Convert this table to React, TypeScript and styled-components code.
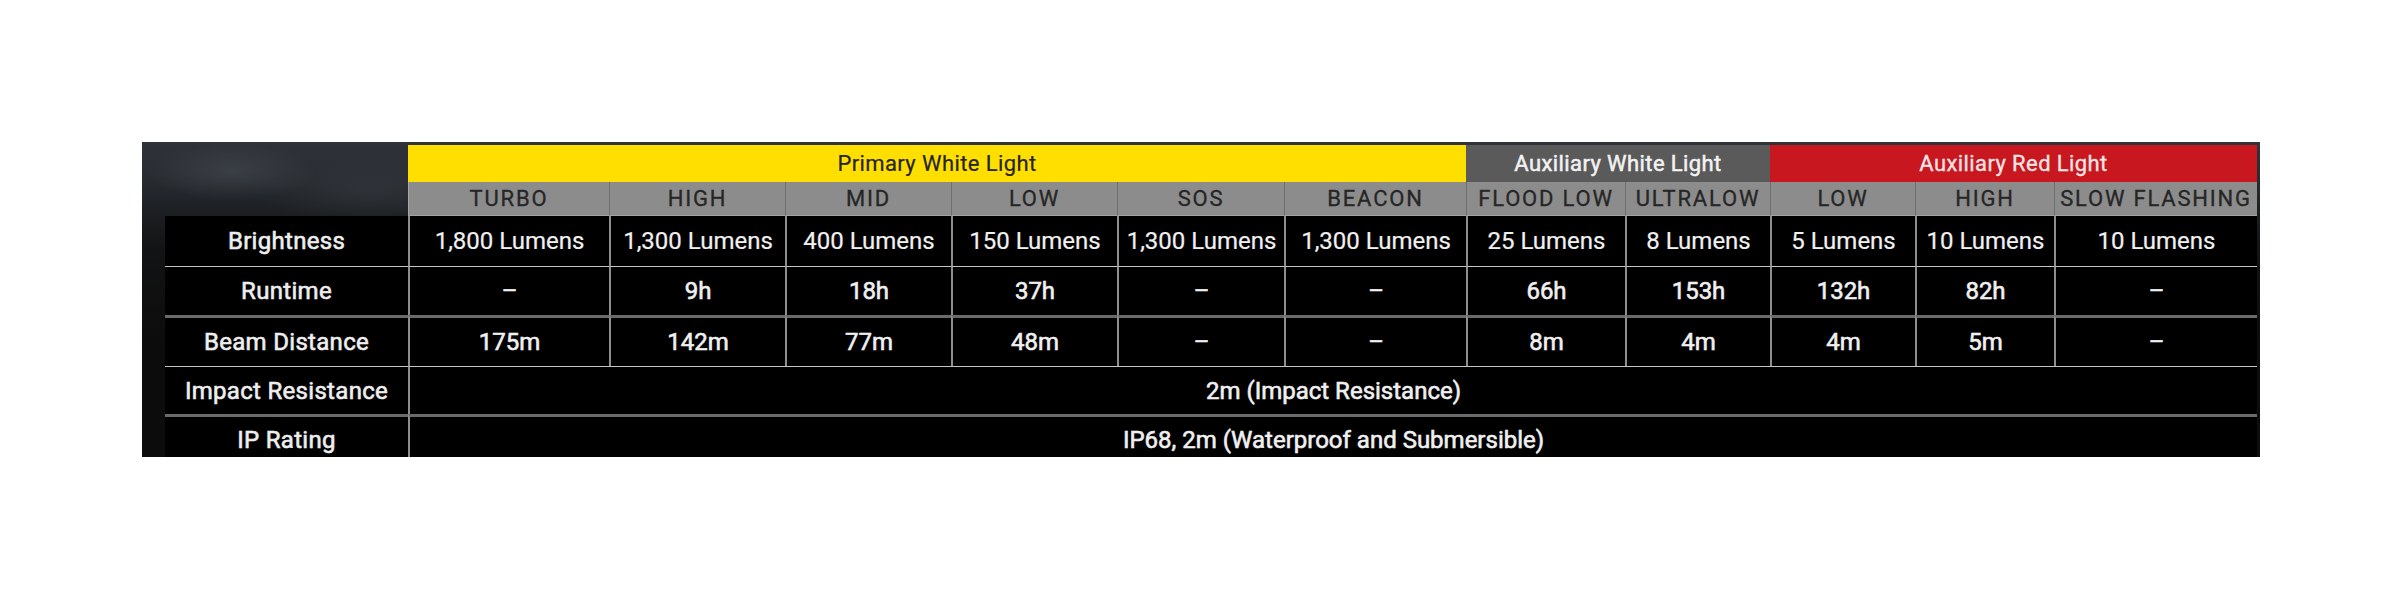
import React from "react";
import styled, { createGlobalStyle, css } from "styled-components";

const GlobalStyle = createGlobalStyle`
  html, body { margin: 0; padding: 0; background: #ffffff; }
  body { font-family: Roboto, "Liberation Sans", Arial, sans-serif; }
`;

const Page = styled.div`
  padding: 142px 0 0 142px;
`;

const Frame = styled.section`
  width: fit-content;
  padding: 3px 3px 0 23px;
  background-color: #0b0b0b;
  background-image:
    radial-gradient(ellipse 120px 40px at 90px 30px, rgba(90, 96, 104, 0.35), transparent 70%),
    radial-gradient(ellipse 160px 50px at 230px 50px, rgba(70, 76, 84, 0.3), transparent 70%),
    linear-gradient(180deg, #30343a 0px, #272b30 40px, #1b1d20 74px, #121314 110px, #0c0c0c 200px);
  background-size: 270px 100%, 270px 100%, 100% 100%;
  background-repeat: no-repeat;
`;

const SpecGrid = styled.div`
  display: grid;
  grid-template-columns: 243px 201px 176px 166px 166px 167px 182px 159px 145px 145px 139px 203px;
  grid-template-rows: 37px 34px 50px 49px 51px 48px 43px;
  font-family: Roboto, "Liberation Sans", Arial, sans-serif;
`;

const Corner = styled.div`
  grid-row: span 2;
`;

type Tone = "yellow" | "grey" | "red";

const toneStyles: Record<Tone, ReturnType<typeof css>> = {
  yellow: css`
    background: #ffdf00;
    color: #24241c;
    -webkit-text-stroke: 0.2px #24241c;
  `,
  grey: css`
    background: #5a5a5a;
    color: #f2f2f2;
    -webkit-text-stroke: 0.5px #f2f2f2;
  `,
  red: css`
    background: #c8171f;
    color: #f7e6e6;
    -webkit-text-stroke: 0.3px #f7e6e6;
  `,
};

const GroupHeader = styled.div<{ $tone: Tone; $span: number }>`
  grid-column: span ${(p) => p.$span};
  display: flex;
  align-items: center;
  justify-content: center;
  font-size: 22px;
  font-weight: 400;
  letter-spacing: 0.4px;
  ${(p) => toneStyles[p.$tone]}
`;

const ModeCell = styled.div<{ $first?: boolean }>`
  display: flex;
  align-items: center;
  justify-content: center;
  box-sizing: border-box;
  background: #8c8c8c;
  color: #262626;
  -webkit-text-stroke: 0.3px #262626;
  font-size: 22px;
  letter-spacing: 1.8px;
  white-space: nowrap;
  border-left: 1px solid ${(p) => (p.$first ? "#a8a8a8" : "#6e6e6e")};
  border-bottom: 1px solid #a2a2a2;
`;

type Edge = "none" | "thin" | "thick";

const edgeStyle = (edge: Edge) => {
  if (edge === "thin") return css`border-top: 1px solid #c4c4c4;`;
  if (edge === "thick") return css`border-top: 3px solid #6a6a6a;`;
  return css``;
};

const LabelCell = styled.div<{ $edge: Edge; $drop?: boolean }>`
  display: flex;
  align-items: center;
  justify-content: center;
  box-sizing: border-box;
  background: #000;
  color: #eeeeee;
  -webkit-text-stroke: 0.6px #eeeeee;
  font-size: 24px;
  font-weight: 400;
  letter-spacing: 0.3px;
  white-space: nowrap;
  ${(p) => edgeStyle(p.$edge)}
  ${(p) => p.$drop && css`padding-top: 6px;`}
`;

const ValueCell = styled.div<{ $edge: Edge; $span?: number; $bold?: boolean; $drop?: boolean }>`
  grid-column: span ${(p) => p.$span ?? 1};
  display: flex;
  align-items: center;
  justify-content: center;
  box-sizing: border-box;
  background: #000;
  color: #f0f0f0;
  -webkit-text-stroke: ${(p) => (p.$bold ? "0.6px" : "0.2px")} #f0f0f0;
  font-size: 24px;
  font-weight: 400;
  white-space: nowrap;
  border-left: 2px solid #8e8e8e;
  ${(p) => edgeStyle(p.$edge)}
  ${(p) => p.$drop && css`padding-top: 6px;`}
`;

const modes = [
  "TURBO",
  "HIGH",
  "MID",
  "LOW",
  "SOS",
  "BEACON",
  "FLOOD LOW",
  "ULTRALOW",
  "LOW",
  "HIGH",
  "SLOW FLASHING",
];

const rows: { label: string; edge: Edge; bold: boolean; values: string[] }[] = [
  {
    label: "Brightness",
    edge: "none",
    bold: false,
    values: [
      "1,800 Lumens",
      "1,300 Lumens",
      "400 Lumens",
      "150 Lumens",
      "1,300 Lumens",
      "1,300 Lumens",
      "25 Lumens",
      "8 Lumens",
      "5 Lumens",
      "10 Lumens",
      "10 Lumens",
    ],
  },
  {
    label: "Runtime",
    edge: "thin",
    bold: true,
    values: ["–", "9h", "18h", "37h", "–", "–", "66h", "153h", "132h", "82h", "–"],
  },
  {
    label: "Beam Distance",
    edge: "thick",
    bold: true,
    values: ["175m", "142m", "77m", "48m", "–", "–", "8m", "4m", "4m", "5m", "–"],
  },
];

export default function App() {
  return (
    <>
      <GlobalStyle />
      <Page>
        <Frame>
          <SpecGrid>
            <Corner />
            <GroupHeader $tone="yellow" $span={6}>Primary White Light</GroupHeader>
            <GroupHeader $tone="grey" $span={2}>Auxiliary White Light</GroupHeader>
            <GroupHeader $tone="red" $span={3}>Auxiliary Red Light</GroupHeader>

            {modes.map((m, i) => (
              <ModeCell key={`m-${i}`} $first={i === 0}>
                {m}
              </ModeCell>
            ))}

            {rows.map((r) => (
              <React.Fragment key={r.label}>
                <LabelCell $edge={r.edge}>{r.label}</LabelCell>
                {r.values.map((v, i) => (
                  <ValueCell key={`${r.label}-${i}`} $edge={r.edge} $bold={r.bold}>
                    {v}
                  </ValueCell>
                ))}
              </React.Fragment>
            ))}

            <LabelCell $edge="thin">Impact Resistance</LabelCell>
            <ValueCell $edge="thin" $span={11} $bold>
              2m (Impact Resistance)
            </ValueCell>

            <LabelCell $edge="thick" $drop>IP Rating</LabelCell>
            <ValueCell $edge="thick" $span={11} $bold $drop>
              IP68, 2m (Waterproof and Submersible)
            </ValueCell>
          </SpecGrid>
        </Frame>
      </Page>
    </>
  );
}
